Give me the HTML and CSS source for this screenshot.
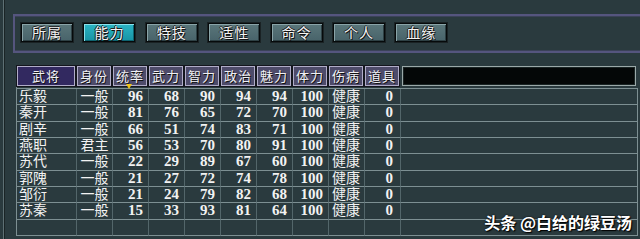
FILE: index.html
```html
<!DOCTYPE html>
<html lang="zh">
<head>
<meta charset="utf-8">
<link rel="stylesheet" href="styles.css">
</head>
<body>
<div class="screen">
  <div class="inner">
    <div class="tabs">
      <div class="btn">所属</div>
      <div class="btn active">能力</div>
      <div class="btn">特技</div>
      <div class="btn">适性</div>
      <div class="btn">命令</div>
      <div class="btn">个人</div>
      <div class="btn">血缘</div>
    </div>
    <div class="table">
      <div class="hd"><span class="hc name">武将</span></div>
      <div class="hd"><span class="hc">身份</span></div>
      <div class="hd"><span class="hc sorted">统率<i class="tri"></i></span></div>
      <div class="hd"><span class="hc">武力</span></div>
      <div class="hd"><span class="hc">智力</span></div>
      <div class="hd"><span class="hc">政治</span></div>
      <div class="hd"><span class="hc">魅力</span></div>
      <div class="hd"><span class="hc">体力</span></div>
      <div class="hd"><span class="hc">伤病</span></div>
      <div class="hd"><span class="hc">道具</span></div>
      <div class="hd"><span class="blackbox"></span></div>

      <div class="c l">乐毅</div><div class="c m">一般</div><div class="c n">96</div><div class="c n">68</div><div class="c n">90</div><div class="c n">94</div><div class="c n">94</div><div class="c n">100</div><div class="c h">健康</div><div class="c n z">0</div><div class="c e"></div>
      <div class="c l">秦开</div><div class="c m">一般</div><div class="c n">81</div><div class="c n">76</div><div class="c n">65</div><div class="c n">72</div><div class="c n">70</div><div class="c n">100</div><div class="c h">健康</div><div class="c n z">0</div><div class="c e"></div>
      <div class="c l">剧辛</div><div class="c m">一般</div><div class="c n">66</div><div class="c n">51</div><div class="c n">74</div><div class="c n">83</div><div class="c n">71</div><div class="c n">100</div><div class="c h">健康</div><div class="c n z">0</div><div class="c e"></div>
      <div class="c l">燕职</div><div class="c m">君主</div><div class="c n">56</div><div class="c n">53</div><div class="c n">70</div><div class="c n">80</div><div class="c n">91</div><div class="c n">100</div><div class="c h">健康</div><div class="c n z">0</div><div class="c e"></div>
      <div class="c l">苏代</div><div class="c m">一般</div><div class="c n">22</div><div class="c n">29</div><div class="c n">89</div><div class="c n">67</div><div class="c n">60</div><div class="c n">100</div><div class="c h">健康</div><div class="c n z">0</div><div class="c e"></div>
      <div class="c l">郭隗</div><div class="c m">一般</div><div class="c n">21</div><div class="c n">27</div><div class="c n">72</div><div class="c n">74</div><div class="c n">78</div><div class="c n">100</div><div class="c h">健康</div><div class="c n z">0</div><div class="c e"></div>
      <div class="c l">邹衍</div><div class="c m">一般</div><div class="c n">21</div><div class="c n">24</div><div class="c n">79</div><div class="c n">82</div><div class="c n">68</div><div class="c n">100</div><div class="c h">健康</div><div class="c n z">0</div><div class="c e"></div>
      <div class="c l">苏秦</div><div class="c m">一般</div><div class="c n">15</div><div class="c n">33</div><div class="c n">93</div><div class="c n">81</div><div class="c n">64</div><div class="c n">100</div><div class="c h">健康</div><div class="c n z">0</div><div class="c e"></div>
      <div class="c l"></div><div class="c m"></div><div class="c n"></div><div class="c n"></div><div class="c n"></div><div class="c n"></div><div class="c n"></div><div class="c n"></div><div class="c h"></div><div class="c n z"></div><div class="c e"></div>
    </div>
  </div>
  <div class="watermark">头条 @白给的绿豆汤</div>
</div>
</body>
</html>
```

FILE: styles.css
```css
html, body {
  margin: 0;
  padding: 0;
  background: #2a3a3e;
}

.screen {
  position: relative;
  width: 640px;
  height: 239px;
  overflow: hidden;
  padding-left: 3px;
  box-sizing: border-box;
  background: #2a3a3e;
  font-family: "Noto Sans CJK SC", sans-serif;
}

.inner {
  height: 100%;
  border-left: 1px solid #5e7074;
  box-shadow: inset 1px 0 0 #1a2426;
  padding-top: 14px;
  box-sizing: border-box;
}

.tabs {
  margin-left: 9px;
  height: 28px;
  border: 2px solid #55557e;
  border-right: none;
  box-shadow: inset 0 1px 0 #3b4258, inset 0 -1px 0 #3b4258;
  padding: 7px 0 0 6px;
  box-sizing: content-box;
  display: flex;
  gap: 10.4px;
  align-items: flex-start;
}

.btn {
  width: 50px;
  height: 17px;
  border: 1px solid #060a0b;
  background: linear-gradient(#5a767a, #48636a);
  box-shadow: inset 1px 1px 0 #8aa4a8, inset -1px -1px 0 #2e4044;
  color: #f4f4f4;
  font-size: 14px;
  line-height: 17px;
  text-align: center;
  letter-spacing: 1px;
  text-shadow: 1px 1px 0 #111, -1px 0 0 #222, 0 -1px 0 #222;
  outline: 1px solid #1a2224;
}

.btn.active {
  background: linear-gradient(#2bb4c4, #1893a4);
  box-shadow: inset 1px 1px 0 #8ae0ea, inset -1px -1px 0 #0e6470;
}

.table {
  margin-top: 13px;
  margin-left: 12px;
  display: grid;
  grid-template-columns: 60px repeat(9, 36px) 1fr;
  grid-template-rows: 23px repeat(9, 16.333px);
  border-left: 1px solid #7d8f92;
  margin-right: 2px;
}

.hd {
  position: relative;
  padding: 0 2px 2px 0;
  box-sizing: border-box;
  border-bottom: 1px solid #7d8f92;
}

.hc {
  position: relative;
  display: block;
  height: 100%;
  box-sizing: border-box;
  background: #4e4b6a;
  border: 1px solid #b0acc8;
  outline: 1px solid #14161e;
  color: #f0f0f4;
  font-size: 13px;
  line-height: 18px;
  text-align: center;
  letter-spacing: 1px;
  text-shadow: 1px 1px 0 #111;
}

.hc.name {
  background: #322960;
}

.tri {
  position: absolute;
  left: 12px;
  bottom: -4px;
  width: 0;
  height: 0;
  border-left: 3px solid transparent;
  border-right: 3px solid transparent;
  border-top: 5px solid #f0c418;
}

.blackbox {
  display: block;
  height: 100%;
  margin-left: 1px;
  box-sizing: border-box;
  background: #040707;
  border: 1px solid #9aa8a8;
  box-shadow: inset 0 0 0 1px #1a2424;
}

.c {
  box-sizing: border-box;
  border-bottom: 1px solid #7d8f92;
  border-right: 1px solid #53666a;
  color: #f2f2f2;
  font-family: "Liberation Serif", "Noto Sans CJK SC", serif;
  font-size: 14px;
  line-height: 15px;
  white-space: nowrap;
}

.c.l {
  padding-left: 2px;
}

.c.m {
  text-align: center;
}

.c.n {
  text-align: right;
  padding-right: 5px;
  font-weight: bold;
  font-size: 15px;
  line-height: 15px;
}

.c.z {
  padding-right: 7px;
}

.c.h {
  padding-left: 3px;
}

.c.e {
  border-right: 1px solid #7d8f92;
}

.watermark {
  position: absolute;
  right: 8px;
  bottom: 7px;
  color: #ffffff;
  font-family: "Noto Sans CJK SC", sans-serif;
  font-weight: bold;
  font-size: 16px;
  line-height: 20px;
  text-shadow: 1px 1px 1px #000, 0 0 2px #000;
}
```
